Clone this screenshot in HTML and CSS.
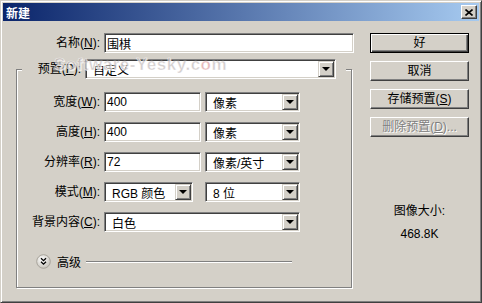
FILE: index.html
```html
<!DOCTYPE html>
<html lang="zh-CN">
<head>
    <meta charset="UTF-8">
    <title>新建</title>
    <link rel="stylesheet" href="styles.css">
</head>
<body>
    <div class="window">
        <div class="titlebar">
            <span class="title">新建</span>
            <span class="close">
                <svg width="8" height="7" viewBox="0 0 8 7"><path d="M0.5 0.5L7.5 6.5M7.5 0.5L0.5 6.5" stroke="#000" stroke-width="1.6" fill="none"/></svg>
            </span>
        </div>
        <div class="content">
            <div class="form">
                <div class="name-row">
                    <label class="lbl name-lbl">名称(<u>N</u>):</label>
                    <div class="field name-field">围棋</div>
                </div>
                <fieldset class="group">
                    <legend class="preset">
                        <label class="lbl preset-lbl">预置(<u>P</u>):</label>
                        <div class="field select preset-select"><span>自定义</span><span class="arrow"></span></div>
                    </legend>
                    <div class="rows">
                        <label class="lbl">宽度(<u>W</u>):</label>
                        <div class="field">400</div>
                        <div class="field select"><span>像素</span><span class="arrow"></span></div>

                        <label class="lbl">高度(<u>H</u>):</label>
                        <div class="field">400</div>
                        <div class="field select"><span>像素</span><span class="arrow"></span></div>

                        <label class="lbl">分辨率(<u>R</u>):</label>
                        <div class="field">72</div>
                        <div class="field select"><span>像素/英寸</span><span class="arrow"></span></div>

                        <label class="lbl">模式(<u>M</u>):</label>
                        <div class="field select mode-select"><span>RGB 颜色</span><span class="arrow"></span></div>
                        <div class="field select"><span>8 位</span><span class="arrow"></span></div>

                        <label class="lbl">背景内容(<u>C</u>):</label>
                        <div class="field select wide-select"><span>白色</span><span class="arrow"></span></div>
                    </div>
                    <div class="advanced">
                        <svg width="15" height="15" viewBox="0 0 15 15">
                            <defs>
                                <radialGradient id="knob" cx="40%" cy="35%" r="70%">
                                    <stop offset="0" stop-color="#ffffff"/>
                                    <stop offset="1" stop-color="#c4c0b8"/>
                                </radialGradient>
                            </defs>
                            <circle cx="7.5" cy="7.5" r="6.8" fill="url(#knob)" stroke="#a8a49c"/>
                            <path d="M5 4.3l2.5 2.4 2.5-2.4M5 7.8l2.5 2.4 2.5-2.4" fill="none" stroke="#000" stroke-width="1.3"/>
                        </svg>
                        <span class="adv-text">高级</span>
                        <span class="adv-line"></span>
                    </div>
                </fieldset>
            </div>
            <div class="side">
                <div class="btn default">好</div>
                <div class="btn">取消</div>
                <div class="btn">存储预置(<u>S</u>)</div>
                <div class="btn disabled">删除预置(<u>D</u>)...</div>
                <div class="size">
                    <div>图像大小:</div>
                    <div class="size-value">468.8K</div>
                </div>
            </div>
        </div>
        <span class="watermark">Software-Yesky.c<span class="wm-o">o</span>m</span>
    </div>
</body>
</html>
```

FILE: styles.css
```css
body {
    margin: 0;
    background-color: #d4d0c8;
    font-family: "Liberation Sans", "Noto Sans CJK SC", sans-serif;
    font-size: 12px;
    color: #000;
}
.window {
    position: relative;
    width: 482px;
    height: 303px;
    box-sizing: border-box;
    padding: 2px;
    background-color: #d4d0c8;
    border: 1px solid;
    border-color: #d4d0c8 #404040 #404040 #d4d0c8;
    box-shadow: inset 1px 1px #fff, inset -1px -1px #808080;
}
.titlebar {
    height: 18px;
    display: flex;
    align-items: center;
    justify-content: space-between;
    padding: 0 2px 0 3px;
    background: linear-gradient(to right, #0a246a, #a6caf0);
}
.title {
    color: #fff;
    font-weight: bold;
}
.close {
    width: 16px;
    height: 14px;
    box-sizing: border-box;
    display: flex;
    align-items: center;
    justify-content: center;
    background-color: #d4d0c8;
    border: 1px solid;
    border-color: #fff #404040 #404040 #fff;
    box-shadow: inset -1px -1px #808080;
}
.content {
    display: flex;
    padding-top: 12px;
}
.form {
    width: 351px;
}
.lbl {
    text-align: right;
    line-height: 20px;
    white-space: nowrap;
}
.name-row {
    display: flex;
    gap: 4px;
}
.name-lbl {
    width: 97px;
}
.field {
    height: 20px;
    box-sizing: border-box;
    display: flex;
    align-items: center;
    padding-left: 2px;
    background-color: #fff;
    border: 1px solid;
    border-color: #808080 #fff #fff #808080;
    box-shadow: inset 1px 1px #404040, inset -1px -1px #d4d0c8;
    white-space: nowrap;
}
.name-field {
    width: 250px;
}
.select {
    justify-content: space-between;
    padding-left: 7px;
    padding-right: 1px;
}
.arrow {
    position: relative;
    width: 16px;
    height: 16px;
    box-sizing: border-box;
    background-color: #d4d0c8;
    border: 1px solid;
    border-color: #d4d0c8 #404040 #404040 #d4d0c8;
    box-shadow: inset 1px 1px #fff, inset -1px -1px #808080;
}
.arrow::after {
    content: "";
    position: absolute;
    left: 3px;
    top: 5px;
    border-left: 4px solid transparent;
    border-right: 4px solid transparent;
    border-top: 4px solid #000;
}
.group {
    margin: 6px 0 0 13px;
    width: 336px;
    box-sizing: border-box;
    padding: 13px 0 18px 0;
    min-inline-size: auto;
    border: 1px solid #808080;
    box-shadow: inset 1px 1px #fff, 1px 1px #fff;
}
.preset {
    display: flex;
    gap: 4px;
    margin-left: 5px;
    padding: 0 10px 0 0;
    background-color: #d4d0c8;
}
.preset-lbl {
    width: 59px;
}
.preset-select {
    width: 251px;
}
.rows {
    display: grid;
    grid-template-columns: 83px 97px 95px;
    grid-auto-rows: 20px;
    column-gap: 4px;
    row-gap: 10px;
}
.mode-select {
    width: 89px;
}
.wide-select {
    grid-column: 2 / 4;
}
.advanced {
    display: flex;
    align-items: center;
    height: 15px;
    margin: 22px 0 0 19px;
}
.adv-text {
    margin-left: 6px;
}
.adv-line {
    width: 206px;
    margin-left: 5px;
    border-top: 1px solid #808080;
    border-bottom: 1px solid #fff;
}
.side {
    width: 99px;
    margin-left: 16px;
    display: flex;
    flex-direction: column;
    gap: 8px;
}
.btn {
    height: 20px;
    box-sizing: border-box;
    text-align: center;
    line-height: 18px;
    background-color: #d4d0c8;
    border: 1px solid;
    border-color: #fff #404040 #404040 #fff;
    box-shadow: inset -1px -1px #808080;
}
.btn.default {
    border-color: #000;
    box-shadow: inset 1px 1px #fff, inset -1px -1px #404040, inset -2px -2px #808080;
}
.btn.disabled {
    color: #808080;
    text-shadow: 1px 1px #fff;
}
.size {
    margin-top: 58px;
    text-align: center;
    line-height: 16px;
}
.size-value {
    margin-top: 7px;
}
/* site watermark laid over the preset row */
.watermark {
    position: absolute;
    left: 53px;
    top: 54px;
    font-size: 17px;
    font-weight: bold;
    letter-spacing: 0.5px;
    color: rgba(175, 165, 165, 0.55);
    -webkit-text-stroke: 0.6px rgba(255, 255, 255, 0.7);
    text-shadow: 1px 1px rgba(255, 255, 255, 0.6);
    pointer-events: none;
}
.wm-o {
    color: rgba(215, 140, 140, 0.6);
}
```
